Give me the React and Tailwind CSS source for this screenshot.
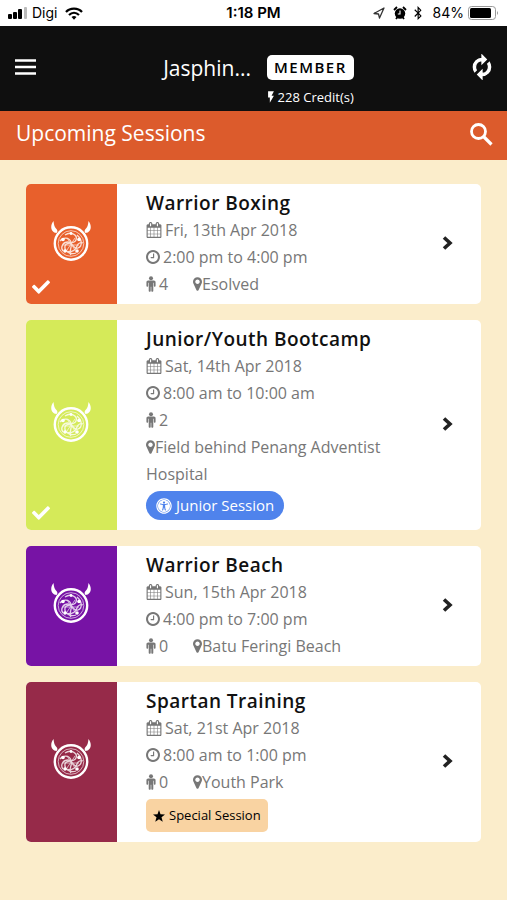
import React from 'react';
import { FaBluetoothB, FaUniversalAccess, FaCheck } from 'react-icons/fa';
import { MdFlashOn } from 'react-icons/md';

const sessions = [
    {
        title: 'Warrior Boxing',
        date: 'Fri, 13th Apr 2018',
        time: '2:00 pm to 4:00 pm',
        people: 4,
        place: 'Esolved',
        color: 'bg-[#e8602c]',
        joined: true,
    },
    {
        title: 'Junior/Youth Bootcamp',
        date: 'Sat, 14th Apr 2018',
        time: '8:00 am to 10:00 am',
        people: 2,
        place: 'Field behind Penang Adventist Hospital',
        color: 'bg-[#d5ea59]',
        joined: true,
        junior: true,
    },
    {
        title: 'Warrior Beach',
        date: 'Sun, 15th Apr 2018',
        time: '4:00 pm to 7:00 pm',
        people: 0,
        place: 'Batu Feringi Beach',
        color: 'bg-[#7713a5]',
    },
    {
        title: 'Spartan Training',
        date: 'Sat, 21st Apr 2018',
        time: '8:00 am to 1:00 pm',
        people: 0,
        place: 'Youth Park',
        color: 'bg-[#962a49]',
        special: true,
    },
];

const CalendarIcon = () => (
    <svg viewBox="64 0 1664 1792" className="inline-block w-4 h-4 mr-[3px] -mt-1" fill="currentColor">
        <path d="M192 1664h288v-288h-288v288zm352 0h320v-288h-320v288zm-352-352h288v-320h-288v320zm352 0h320v-320h-320v320zm-352-384h288v-288h-288v288zm736 736h320v-288h-320v288zm-384-736h320v-288h-320v288zm768 736h288v-288h-288v288zm-384-352h320v-320h-320v320zm-352-864v-288q0-13-9.5-22.5t-22.5-9.5h-64q-13 0-22.5 9.5t-9.5 22.5v288q0 13 9.5 22.5t22.5 9.5h64q13 0 22.5-9.5t9.5-22.5zm736 864h288v-320h-288v320zm-384-384h320v-288h-320v288zm384 0h288v-288h-288v288zm32-480v-288q0-13-9.5-22.5t-22.5-9.5h-64q-13 0-22.5 9.5t-9.5 22.5v288q0 13 9.5 22.5t22.5 9.5h64q13 0 22.5-9.5t9.5-22.5zm384-64v1280q0 52-38 90t-90 38h-1408q-52 0-90-38t-38-90v-1280q0-52 38-90t90-38h128v-96q0-66 47-113t113-47h64q66 0 113 47t47 113v96h384v-96q0-66 47-113t113-47h64q66 0 113 47t47 113v96h128q52 0 90 38t38 90z" />
    </svg>
);

const ClockIcon = () => (
    <svg viewBox="128 128 1536 1536" className="inline-block w-3.5 h-3.5 mr-[3px] -mt-1" fill="currentColor">
        <path d="M1024 544v448q0 14-9 23t-23 9h-320q-14 0-23-9t-9-23v-64q0-14 9-23t23-9h224v-352q0-14 9-23t23-9h64q14 0 23 9t9 23zm416 352q0-148-73-273t-198-198-273-73-273 73-198 198-73 273 73 273 198 198 273 73 273-73 198-198 73-273zm224 0q0 209-103 385.5t-279.5 279.5-385.5 103-385.5-103-279.5-279.5-103-385.5 103-385.5 279.5-279.5 385.5-103 385.5 103 279.5 279.5 103 385.5z" />
    </svg>
);

const PersonIcon = () => (
    <svg viewBox="384 48 1024 1792" className="inline-block w-2.5 h-4 mr-[3px] -mt-1" fill="currentColor">
        <path d="M1408 736v416q0 40-28 68t-68 28-68-28-28-68v-352h-64v912q0 46-33 79t-79 33-79-33-33-79v-464h-64v464q0 46-33 79t-79 33-79-33-33-79v-912h-64v352q0 40-28 68t-68 28-68-28-28-68v-416q0-80 56-136t136-56h640q80 0 136 56t56 136z" />
        <circle cx="896" cy="288" r="224" />
    </svg>
);

const PinIcon = () => (
    <svg viewBox="384 128 1024 1536" className="inline-block w-[9px] h-3.5 -mt-1" fill="currentColor">
        <path d="M1152 640q0-106-75-181t-181-75-181 75-75 181 75 181 181 75 181-75 75-181zm256 0q0 109-33 179l-364 774q-16 33-47.5 52t-67.5 19-67.5-19-46.5-52l-365-774q-33-70-33-179 0-212 150-362t362-150 362 150 150 362z" />
    </svg>
);

// horned shield with the knot pattern inside
const Logo = () => (
    <svg viewBox="0 0 40 40" className="w-10 h-10" fill="none" stroke="#fff">
        <path d="M2.5 0C-1.5 5 0 11.5 5.5 12C7 10.5 6.5 9 5 7.5C3.5 6 3 4 2.5 0Z" fill="#fff" stroke="none" />
        <path d="M37.5 0C41.5 5 40 11.5 34.5 12C33 10.5 33.5 9 35 7.5C36.5 6 37 4 37.5 0Z" fill="#fff" stroke="none" />
        <circle cx="20" cy="22.5" r="16.2" strokeWidth="2.4" />
        <g strokeWidth="1.3" opacity="0.8">
            <circle cx="20" cy="22.5" r="12.8" strokeWidth="0.8" />
            <path d="M14 14C20 10 27 14 25 19C23 24 15 20 14 25C13 30 19 34 25 32" />
            <path d="M26 14C31 18 32 25 27 27C22 29 22 21 17 21C12 21 9 26 12 30" />
            <path d="M9 20C12 16 18 16 20 21C22 26 17 30 20 34" />
            <path d="M13 29C18 32 24 31 26 25C27 22 30 21 32 22" />
            <path d="M16 17L24 29M24 17L16 29M12 24H28" strokeWidth="0.8" />
        </g>
        <g fill="#fff" stroke="none">
            <circle cx="12" cy="18.5" r="1.8" />
            <circle cx="28" cy="18.5" r="1.8" />
            <circle cx="14" cy="30" r="1.8" />
            <circle cx="26" cy="30" r="1.8" />
            <circle cx="20" cy="12.5" r="1.4" />
        </g>
    </svg>
);

const StatusBar = () => (
    <div className="relative flex items-center justify-between h-[26px] px-2 bg-white text-black text-sm font-[Inter,sans-serif]">
        <div className="flex items-center gap-1">
            <svg viewBox="0 0 20 12" className="w-5 h-3">
                <rect x="0" y="7" width="4" height="5" rx="1" />
                <rect x="5" y="5" width="4" height="7" rx="1" />
                <rect x="10" y="2" width="4" height="10" rx="1" />
                <rect x="16" y="0" width="3" height="12" rx="1" fill="#bbb" />
            </svg>
            <span>Digi</span>
            <svg viewBox="0 0 18 13" className="ml-1 w-[18px] h-[13px]" fill="none" stroke="#000" strokeWidth="2.2">
                <path d="M1 5C5 0.5 13 0.5 17 5" />
                <path d="M4 8C7 5 11 5 14 8" />
                <path d="M6.5 10Q9 8 11.5 10L9 12.8Z" fill="#000" stroke="none" />
            </svg>
        </div>
        <span className="absolute left-1/2 -translate-x-1/2 text-[15px] font-semibold">1:18 PM</span>
        <div className="flex items-center gap-1">
            <svg viewBox="0 0 12 12" className="w-3 h-3 mr-1" fill="none" stroke="#333" strokeWidth="1.3" strokeLinejoin="round">
                <path d="M11 1L1 6.5L5.5 7L6.5 11Z" />
            </svg>
            <svg viewBox="0 0 14 14" className="w-3.5 h-3.5">
                <circle cx="7" cy="7.5" r="5.2" />
                <path d="M1 4L4 1M13 4L10 1M3 13L4.5 11M11 13L9.5 11" stroke="#000" strokeWidth="1.8" />
                <path d="M7 4.5V8H4.8" fill="none" stroke="#fff" strokeWidth="1.1" />
            </svg>
            <FaBluetoothB className="w-3.5 h-3.5" />
            <span className="ml-1">84%</span>
            <svg viewBox="0 0 31 14" className="w-[31px] h-3.5">
                <rect x="0.5" y="0.5" width="27" height="13" rx="3" fill="none" stroke="#999" />
                <rect x="2" y="2" width="21" height="10" rx="1.5" />
                <path d="M29 5Q31 7 29 9Z" fill="#999" />
            </svg>
        </div>
    </div>
);

const SessionCard = ({ session }) => {
    const longPlace = session.place.length > 20;

    return (
        <li className="flex rounded-[5px] overflow-hidden bg-white">
            <div className={`relative flex items-center justify-center w-[91px] pb-1.5 pr-0.5 shrink-0 ${session.color}`}>
                <Logo />
                {session.joined && <FaCheck className="absolute left-1.5 bottom-2 w-[18px] h-[18px] text-white" />}
            </div>
            <div className="flex-1 min-w-0 pl-[29px] py-1.5 text-base leading-[27px] text-[#777]">
                <h2 className="text-[19px] leading-[27px] font-semibold tracking-wide text-[#111]">{session.title}</h2>
                <p><CalendarIcon />{session.date}</p>
                <p><ClockIcon />{session.time}</p>
                <p className={longPlace ? '' : 'flex'}>
                    <span className={longPlace ? 'block' : 'w-[47px]'}><PersonIcon />{session.people}</span>
                    <span><PinIcon />{session.place}</span>
                </p>
                {session.junior && (
                    <span className="flex items-center gap-1 w-fit h-[29px] mt-[3px] mb-1 px-2.5 rounded-full bg-[#4f83ec] text-[15px] text-white">
                        <FaUniversalAccess className="w-4 h-4" />Junior Session
                    </span>
                )}
                {session.special && (
                    <span className="flex items-center gap-1 w-fit h-[33px] mt-[3px] mb-1 px-[7px] rounded-[5px] bg-[#f9d3a2] text-[13px] text-black">
                        <svg viewBox="0 0 24 24" className="w-3 h-3" fill="currentColor">
                            <path d="M12 0L15 8.5L24 9L17 14.5L19.5 23.5L12 18.5L4.500 23.500L7 14.5L0 9L9 8.5Z" />
                        </svg>
                        Special Session
                    </span>
                )}
            </div>
            <button aria-label={session.title} className="w-[68px] pb-[3px] shrink-0 flex items-center justify-center text-[#222]">
                <svg viewBox="0 0 12 14" className="w-3 h-3.5" fill="none" stroke="currentColor" strokeWidth="3.6">
                    <path d="M3 1.5L9 7L3 12.5" />
                </svg>
            </button>
        </li>
    );
};

const App = () => {
    return (
        <div className="min-h-screen bg-[#fbedcb] font-['Open_Sans',sans-serif]">
            <StatusBar />
            <header className="flex items-center justify-between h-[85px] px-3 pb-1 bg-[#0f0f0f] text-white">
                <button aria-label="Menu">
                    <svg viewBox="0 0 28 28" className="w-7 h-7" stroke="currentColor" strokeWidth="2.6">
                        <path d="M3 7.5H24M3 14H24M3 20.5H24" />
                    </svg>
                </button>
                <div className="pt-[26px] pl-2">
                    <div className="flex items-center gap-4">
                        <h1 className="text-[21px] leading-[30px]">Jasphin...</h1>
                        <span className="h-[25px] px-[7px] rounded-[5px] bg-white text-black text-[15px] leading-[25px] tracking-widest font-semibold">MEMBER</span>
                    </div>
                    <p className="flex items-center justify-end text-[13px] leading-5 pt-1"><MdFlashOn className="w-3.5 h-3.5" />228 Credit(s)</p>
                </div>
                <button aria-label="Refresh">
                    <svg viewBox="0 0 24 24" className="w-[26px] h-[26px]" fill="currentColor" stroke="currentColor" strokeWidth="1.2">
                        <path d="M12 6v3l4-4-4-4v3c-4.42 0-8 3.58-8 8 0 1.57.46 3.03 1.24 4.26L6.7 14.8c-.45-.83-.7-1.79-.7-2.8 0-3.31 2.69-6 6-6zm6.76 1.74L17.3 9.2c.44.84.7 1.79.7 2.800 0 3.310-2.690 6-6 6v-3l-4 4 4 4v-3c4.420 0 8-3.580 8-8 0-1.570-.46-3.030-1.240-4.260z" />
                    </svg>
                </button>
            </header>
            <div className="flex items-center justify-between h-[49px] pl-4 pr-3 pb-[3px] bg-[#dc5b2c] text-white">
                <h2 className="text-[21px]">Upcoming Sessions</h2>
                <button aria-label="Search">
                    <svg viewBox="0 0 28 28" className="w-7 h-7" fill="none" stroke="currentColor" strokeWidth="2.8">
                        <circle cx="11.5" cy="11.500" r="7" />
                        <path d="M16.5 16.500L24.5 24.500" strokeWidth="3.2" />
                    </svg>
                </button>
            </div>
            <ul className="flex flex-col gap-4 px-[26px] py-6">
                {sessions.map((session) => (
                    <SessionCard key={session.title} session={session} />
                ))}
            </ul>
        </div>
    );
};

export default App;
